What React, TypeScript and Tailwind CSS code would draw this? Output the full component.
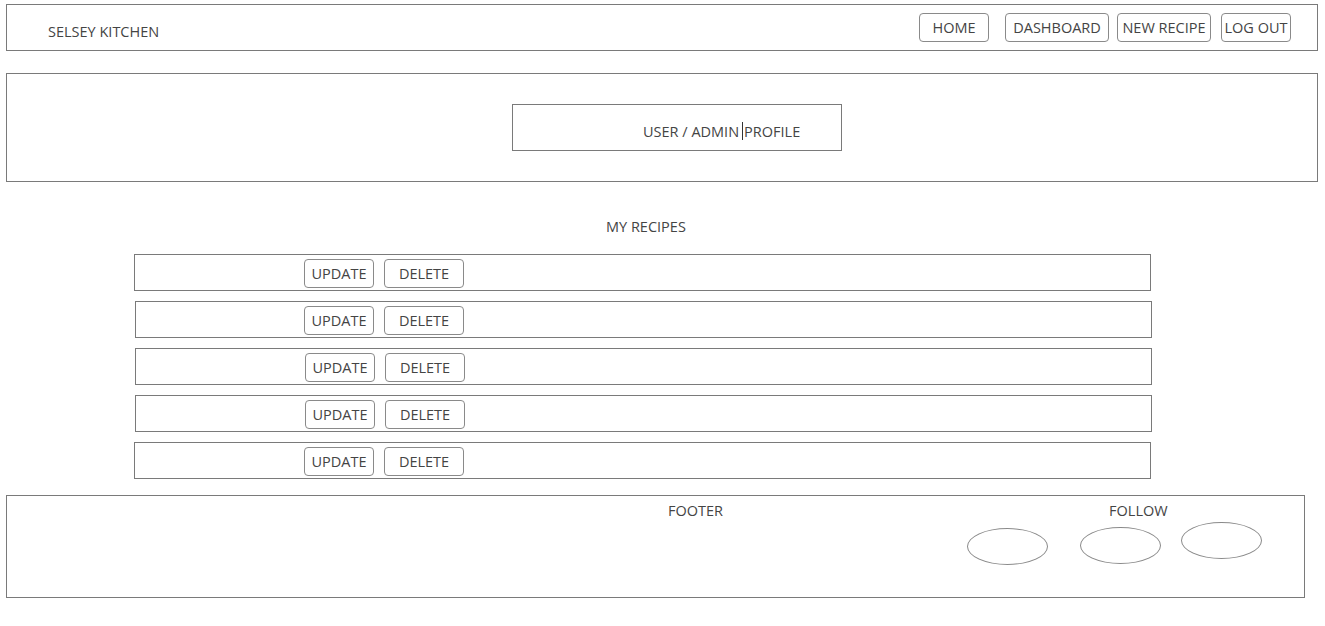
import React from "react";

const navItems = [
  { label: "HOME", w: "w-[70px]", ml: "ml-0" },
  { label: "DASHBOARD", w: "w-[104px]", ml: "ml-[16px]" },
  { label: "NEW RECIPE", w: "w-[94px]", ml: "ml-[8px]" },
  { label: "LOG OUT", w: "w-[70px]", ml: "ml-[10px]" },
];

// small x offsets copied from the wireframe
const rows = [
  { ml: "ml-[134px]", btn: "ml-[169px]" },
  { ml: "ml-[135px]", btn: "ml-[168px]" },
  { ml: "ml-[135px]", btn: "ml-[169px]" },
  { ml: "ml-[135px]", btn: "ml-[169px]" },
  { ml: "ml-[134px]", btn: "ml-[169px]" },
];

function WireButton({ label, className }: { label: string; className?: string }) {
  return (
    <div
      className={`h-[29px] flex items-center justify-center rounded-[4px] border border-[#8a8a8a] text-[14.5px] text-[#444] ${className ?? ""}`}
    >
      {label}
    </div>
  );
}

export default function App() {
  return (
    <div className="w-[1325px] h-[626px] bg-white overflow-hidden font-['Open_Sans',sans-serif] text-[14.5px] leading-[20px] text-[#444]">
      {/* header */}
      <header className="ml-[6px] mt-[4px] w-[1312px] h-[47px] border border-[#7a7a7a] flex items-start">
        <div className="ml-[41px] mt-[17px]">SELSEY KITCHEN</div>
        <nav className="ml-auto mr-[26px] mt-[8px] flex">
          {navItems.map((n) => (
            <WireButton key={n.label} label={n.label} className={`${n.w} ${n.ml}`} />
          ))}
        </nav>
      </header>

      {/* profile */}
      <section className="ml-[6px] mt-[22px] w-[1312px] h-[109px] border border-[#7a7a7a]">
        <div className="ml-[505px] mt-[30px] w-[330px] h-[47px] border border-[#7a7a7a] pl-[130px] pt-[17px]">
          USER / ADMIN
          <span className="inline-block ml-[3px] mr-[1px] w-px h-[18px] bg-[#333] align-[-3px]" />
          PROFILE
        </div>
      </section>

      <div className="ml-[606px] mt-[35px]">MY RECIPES</div>

      {/* recipe rows */}
      <div className="mt-[17px] flex flex-col gap-[10px]">
        {rows.map((r, i) => (
          <div key={i} className={`${r.ml} w-[1017px] h-[37px] border border-[#7a7a7a] flex items-start`}>
            <WireButton label="UPDATE" className={`${r.btn} mt-[4px] w-[70px]`} />
            <WireButton label="DELETE" className="ml-[10px] mt-[4px] w-[80px]" />
          </div>
        ))}
      </div>

      {/* footer */}
      <footer className="ml-[6px] mt-[16px] w-[1299px] h-[103px] border border-[#7a7a7a] pt-[5px]">
        <div className="flex">
          <div className="ml-[661px]">FOOTER</div>
          <div className="ml-[386px]">FOLLOW</div>
        </div>
        <div className="flex items-start ml-[960px] mt-[1px]">
          <div className="mt-[6px] w-[81px] h-[37px] rounded-[50%] border border-[#8a8a8a]" />
          <div className="ml-[32px] mt-[5px] w-[81px] h-[37px] rounded-[50%] border border-[#8a8a8a]" />
          <div className="ml-[20px] w-[81px] h-[37px] rounded-[50%] border border-[#8a8a8a]" />
        </div>
      </footer>
    </div>
  );
}
